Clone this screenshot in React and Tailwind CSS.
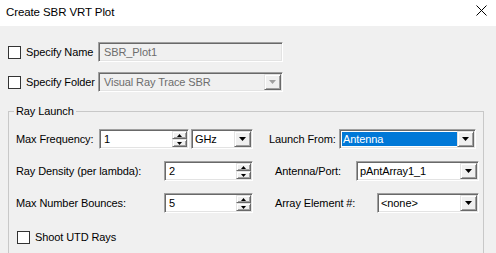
import React from "react";

const sunken =
  "border border-[#a0a0a0] border-r-white border-b-white shadow-[inset_1px_1px_0_#696969,inset_-1px_-1px_0_#e3e3e3] p-[1px]";
const raised =
  "border border-[#e3e3e3] border-r-[#696969] border-b-[#696969] shadow-[inset_1px_1px_0_#fff,inset_-1px_-1px_0_#a0a0a0] bg-[#f0f0f0]";

function Arrow({ color = "#000", w = 7, h = 4 }) {
  return (
    <svg width={w} height={h} viewBox={`0 0 ${w} ${h}`}>
      <polygon points={`0,0 ${w},0 ${w / 2},${h}`} fill={color} />
    </svg>
  );
}

function UpArrow() {
  return (
    <svg width="5" height="3" viewBox="0 0 5 3">
      <polygon points="0,3 5,3 2.5,0" fill="#000" />
    </svg>
  );
}

function Check({ label }) {
  return (
    <div className="flex items-center">
      <div className="w-[13px] h-[13px] border border-[#333] bg-white" />
      <span className="ml-[5px]">{label}</span>
    </div>
  );
}

function Spin({ w, value }) {
  return (
    <div className={`flex h-[20px] bg-white ${sunken} ${w}`}>
      <div className="flex-1 flex items-center pl-[3px] leading-none">{value}</div>
      <div className="flex flex-col w-[15px]">
        <div className={`flex-1 flex items-center justify-center ${raised}`}>
          <UpArrow />
        </div>
        <div className={`flex-1 flex items-center justify-center ${raised}`}>
          <Arrow w={5} h={3} />
        </div>
      </div>
    </div>
  );
}

function Combo({ w, value, selected, disabled }) {
  return (
    <div className={`flex h-[20px] ${disabled ? "bg-[#f0f0f0]" : "bg-white"} ${sunken} ${w}`}>
      <div
        className={`flex-1 flex items-center leading-none ${
          selected ? "bg-[#0078d7] text-white pl-[1px] m-[1px] mr-0" : disabled ? "pl-[4px] text-[#6d6d6d]" : "pl-[2px]"
        }`}
      >
        {value}
      </div>
      <div className={`w-[17px] flex items-center justify-center ${raised}`}>
        <Arrow color={disabled ? "#a0a0a0" : "#000"} />
      </div>
    </div>
  );
}

export default function App() {
  return (
    <div className="w-[496px] h-[253px] overflow-hidden bg-[#f0f0f0] text-[11px] tracking-[-0.1px] text-black font-['Liberation_Sans',Arial,sans-serif]">
      <div className="h-[26px] bg-white flex items-center justify-between pl-[6px] pr-[9px]">
        <span className="text-[11.5px]">Create SBR VRT Plot</span>
        <svg width="11" height="11" viewBox="0 0 11 11" className="self-start mt-[5px]">
          <path d="M0.5 0.5 L10.5 10.5 M10.5 0.5 L0.5 10.5" stroke="#000" strokeWidth="1" />
        </svg>
      </div>

      <div className="px-[8px] pt-[16px]">
        <div className="flex items-center h-[20px]">
          <div className="w-[90px]">
            <Check label="Specify Name" />
          </div>
          <div className={`w-[185px] h-[20px] flex items-center pl-[5px] text-[#6d6d6d] ${sunken}`}>SBR_Plot1</div>
        </div>
        <div className="flex items-center h-[20px] mt-[10px]">
          <div className="w-[90px]">
            <Check label="Specify Folder" />
          </div>
          <Combo w="w-[185px]" value="Visual Ray Trace SBR" disabled />
        </div>

        <fieldset className="mt-[12px] w-[476px] border border-[#c8c8c8] pl-[7px] pt-[11px] pb-[30px]">
          <legend className="-ml-[2px] px-[2px] leading-[14px]">Ray Launch</legend>

          <div className="flex flex-col gap-[12px]">
            <div className="flex items-center h-[20px]">
              <div className="w-[237px] flex items-center">
                <span>Max Frequency:</span>
                <div className="ml-auto flex">
                  <Spin w="w-[90px]" value="1" />
                  <div className="ml-[2px]">
                    <Combo w="w-[62px]" value="GHz" />
                  </div>
                </div>
              </div>
              <div className="w-[226px] flex items-center pl-[16px] pr-[3px]">
                <span>Launch From:</span>
                <div className="ml-auto">
                  <Combo w="w-[137px]" value="Antenna" selected />
                </div>
              </div>
            </div>

            <div className="flex items-center h-[20px]">
              <div className="w-[237px] flex items-center">
                <span>Ray Density (per lambda):</span>
                <div className="ml-auto">
                  <Spin w="w-[89px]" value="2" />
                </div>
              </div>
              <div className="w-[226px] flex items-center pl-[22px]">
                <span>Antenna/Port:</span>
                <div className="ml-auto">
                  <Combo w="w-[123px]" value="pAntArray1_1" />
                </div>
              </div>
            </div>

            <div className="flex items-center h-[20px]">
              <div className="w-[237px] flex items-center">
                <span>Max Number Bounces:</span>
                <div className="ml-auto">
                  <Spin w="w-[89px]" value="5" />
                </div>
              </div>
              <div className="w-[226px] flex items-center pl-[22px]">
                <span>Array Element #:</span>
                <div className="ml-auto">
                  <Combo w="w-[102px]" value="<none>" />
                </div>
              </div>
            </div>
          </div>

          <div className="mt-[16px] pl-[1px]">
            <Check label="Shoot UTD Rays" />
          </div>
        </fieldset>
      </div>
    </div>
  );
}
